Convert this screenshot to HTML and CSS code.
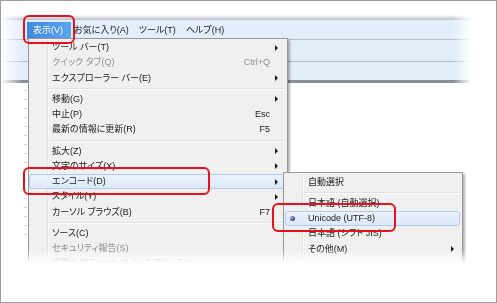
FILE: index.html
```html
<!DOCTYPE html>
<html lang="ja">
<head>
<meta charset="utf-8">
<title>表示メニュー</title>
<link rel="stylesheet" href="styles.css">
</head>
<body>
<div class="frame">
  <div class="shot">
    <div class="chrome">
      <div class="shade"></div>
      <div class="menubar">
        <span class="mb-item active">表示(V)</span>
        <span class="mb-item">お気に入り(A)</span>
        <span class="mb-item">ツール(T)</span>
        <span class="mb-item">ヘルプ(H)</span>
      </div>
      <div class="bar bar-mid"></div>
      <div class="bar bar-last"></div>
    </div>

    <div class="menu main">
      <div class="item"><span class="ic"></span><span class="lbl">ツール バー(T)</span><span class="key"></span><span class="arr"><i class="tri"></i></span></div>
      <div class="item off"><span class="ic"></span><span class="lbl">クイック タブ(Q)</span><span class="key">Ctrl+Q</span><span class="arr"></span></div>
      <div class="item"><span class="ic"></span><span class="lbl">エクスプローラー バー(E)</span><span class="key"></span><span class="arr"><i class="tri"></i></span></div>
      <div class="sep"></div>
      <div class="item"><span class="ic"></span><span class="lbl">移動(G)</span><span class="key"></span><span class="arr"><i class="tri"></i></span></div>
      <div class="item"><span class="ic"></span><span class="lbl">中止(P)</span><span class="key">Esc</span><span class="arr"></span></div>
      <div class="item"><span class="ic"></span><span class="lbl">最新の情報に更新(R)</span><span class="key">F5</span><span class="arr"></span></div>
      <div class="sep"></div>
      <div class="item"><span class="ic"></span><span class="lbl">拡大(Z)</span><span class="key"></span><span class="arr"><i class="tri"></i></span></div>
      <div class="item"><span class="ic"></span><span class="lbl">文字のサイズ(X)</span><span class="key"></span><span class="arr"><i class="tri"></i></span></div>
      <div class="item hot"><span class="ic"></span><span class="lbl">エンコード(D)</span><span class="key"></span><span class="arr"><i class="tri"></i></span></div>
      <div class="item"><span class="ic"></span><span class="lbl">スタイル(Y)</span><span class="key"></span><span class="arr"><i class="tri"></i></span></div>
      <div class="item"><span class="ic"></span><span class="lbl">カーソル ブラウズ(B)</span><span class="key">F7</span><span class="arr"></span></div>
      <div class="sep"></div>
      <div class="item"><span class="ic"></span><span class="lbl">ソース(C)</span><span class="key"></span><span class="arr"></span></div>
      <div class="item off"><span class="ic"></span><span class="lbl">セキュリティ報告(S)</span><span class="key"></span><span class="arr"></span></div>
      <div class="item off"><span class="ic"></span><span class="lbl">国際化対応 Web サイトのアドレス(I)</span><span class="key"></span><span class="arr"></span></div>
      <div class="item"><span class="ic"></span><span class="lbl">Web ページのプライバシー ポリシー(V)</span><span class="key"></span><span class="arr"></span></div>
    </div>

    <div class="menu sub">
      <div class="item"><span class="ic"></span><span class="lbl">自動選択</span><span class="key"></span><span class="arr"></span></div>
      <div class="sep"></div>
      <div class="item"><span class="ic"></span><span class="lbl">日本語 (自動選択)</span><span class="key"></span><span class="arr"></span></div>
      <div class="item hot"><span class="ic"><i class="dot"></i></span><span class="lbl">Unicode (UTF-8)</span><span class="key"></span><span class="arr"></span></div>
      <div class="item"><span class="ic"></span><span class="lbl">日本語 (シフト JIS)</span><span class="key"></span><span class="arr"></span></div>
      <div class="item"><span class="ic"></span><span class="lbl">その他(M)</span><span class="key"></span><span class="arr"><i class="tri"></i></span></div>
      <div class="sep"></div>
      <div class="item"><span class="ic"></span><span class="lbl">右から左に表示(D)</span><span class="key"></span><span class="arr"></span></div>
    </div>

    <div class="callout c1"></div>
    <div class="callout c2"></div>
    <div class="callout c3"></div>
  </div>
</div>
</body>
</html>
```

FILE: styles.css
```css
* {
  box-sizing: border-box;
  margin: 0;
  padding: 0;
}

html, body {
  background: #fff;
}

body {
  width: 497px;
  height: 303px;
  overflow: hidden;
  font-family: "Liberation Sans", "Noto Sans CJK JP", sans-serif;
  font-size: 9px;
  line-height: 1;
  color: #1a1a1a;
  font-feature-settings: "palt";
}

.frame {
  width: 497px;
  height: 303px;
  border: 1px solid #9d9d9d;
  position: relative;
  background: #fff;
}

.shot {
  position: relative;
  width: 100%;
  height: 100%;
  overflow: hidden;
  background: repeating-linear-gradient(to bottom, #d6d6d6 0 1px, transparent 1px 9px) 23px 44px / 3px 196px no-repeat;
  -webkit-mask-image: linear-gradient(to bottom, #000 249px, transparent 262px);
  mask-image: linear-gradient(to bottom, #000 249px, transparent 262px);
}

/* browser chrome strips behind the menu */
.chrome {
  margin-top: 14px;
  -webkit-mask-image: linear-gradient(to right, transparent 0, #000 22px, #000 452px, transparent 470px);
  mask-image: linear-gradient(to right, transparent 0, #000 22px, #000 452px, transparent 470px);
}

.shade {
  height: 5px;
  background: linear-gradient(to bottom, rgba(180, 188, 198, 0), rgba(170, 180, 192, 0.85));
}

.menubar {
  height: 20px;
  display: flex;
  align-items: flex-end;
  padding-left: 26px;
  background: #e4eefa;
  border-bottom: 1px solid #b4bdc8;
}

.mb-item {
  height: 17px;
  display: flex;
  align-items: center;
  padding: 0 3px;
  margin-left: 4px;
  white-space: nowrap;
}

.mb-item.active {
  padding: 0 8px 0 6px;
  margin-left: 0;
  color: #fff;
  background: linear-gradient(to right, #3e89e0, #5aa3f0);
}

.mb-item.active + .mb-item {
  margin-left: 0;
}

.bar {
  background: #e2edfa;
}

.bar-mid {
  height: 22px;
  border-bottom: 1px solid #b4bdc8;
}

.bar-last {
  height: 21px;
  border-bottom: 3px solid #8a8f96;
}

/* menus */
.menu {
  position: absolute;
  background:
    linear-gradient(to right, transparent 18px, #e3e3e3 18px 19px, #fafafa 19px 20px, transparent 20px),
    #f0f0f0;
  border: 1px solid #979797;
  box-shadow: 2px 2px 2px rgba(0, 0, 0, 0.3);
}

.main {
  left: 27px;
  top: 37px;
  width: 260px;
  height: 260px;
  padding-top: 1px;
}

.sub {
  left: 282px;
  top: 171px;
  width: 180px;
  height: 120px;
  padding-top: 1.5px;
}

.item {
  height: 15.25px;
  display: grid;
  grid-template-columns: 22px 1fr auto 14px;
  align-items: center;
  border: 1px solid transparent;
  border-radius: 3px;
  margin-right: 2px;
  white-space: nowrap;
}

.item.off {
  color: #8e8e8e;
}

.item.hot {
  background: linear-gradient(to bottom, #eaf2fc, #dde9f8);
  border-color: #b3cbe9;
}

.sub .item {
  margin-left: 1px;
}

.key {
  text-align: right;
  font-family: "Liberation Sans", sans-serif;
}

.arr {
  display: flex;
  align-items: center;
  padding-left: 5px;
}

.sub .arr {
  padding-left: 6px;
}

.tri {
  display: block;
  width: 0;
  height: 0;
  border-left: 3px solid #1a1a1a;
  border-top: 3px solid transparent;
  border-bottom: 3px solid transparent;
}

.ic {
  display: flex;
  align-items: center;
}

.dot {
  display: block;
  width: 5px;
  height: 5px;
  margin-left: 4px;
  border-radius: 50%;
  background: radial-gradient(circle at 35% 35%, #a9aee8, #3b3f94 70%);
}

.sep {
  height: 2px;
  margin: 2px 2px 2px 19px;
  border-top: 1px solid #e0e0e0;
  border-bottom: 1px solid #fdfdfd;
}

/* red annotation boxes */
.callout {
  position: absolute;
  border: 2px solid #e8101a;
  border-radius: 6px;
}

.c1 {
  left: 22px;
  top: 14px;
  width: 52px;
  height: 29px;
}

.c2 {
  left: 22px;
  top: 166px;
  width: 187px;
  height: 28px;
}

.c3 {
  left: 271px;
  top: 202px;
  width: 124px;
  height: 29px;
}
```
